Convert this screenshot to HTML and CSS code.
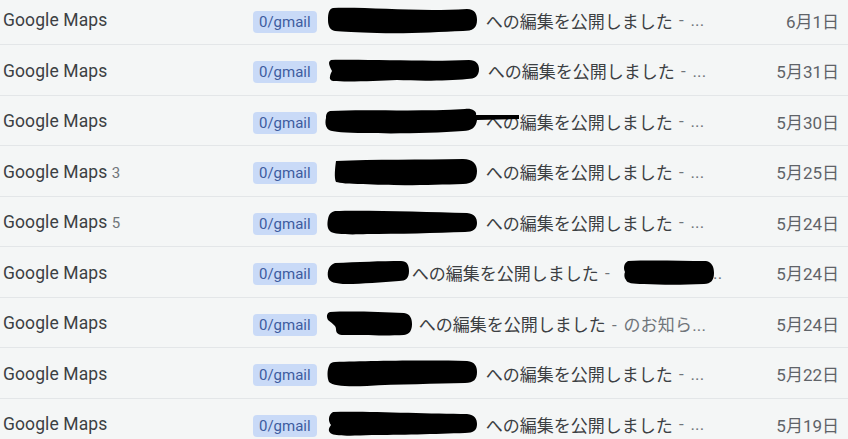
FILE: index.html
```html
<!DOCTYPE html>
<html lang="ja">
<head>
<meta charset="utf-8">
<title>Gmail list</title>
<link rel="stylesheet" href="styles.css">
</head>
<body>
<div class="list">
  <div class="row">
    <div class="sender">Google Maps</div>
    <span class="chip">0/gmail</span>
    <div class="subject">
      <svg class="blob" width="150" height="27" viewBox="0 0 150 27"><path d="M6 1 C45 0 90 5 140 2 C148 2 150 7 150 13 C150 21 146 24 136 24 C110 25 80 27 50 26 C30 25 15 25 8 24 C3 23 1 19 1 13 C1 6 2 2 6 1Z"/></svg>
      <span class="subj">への編集を公開しました</span><span class="snip"> - ...</span>
    </div>
    <div class="date">6月1日</div>
  </div>
  <div class="row">
    <div class="sender">Google Maps</div>
    <span class="chip">0/gmail</span>
    <div class="subject">
      <svg class="blob" width="152" height="23" viewBox="0 0 152 23"><path d="M4 1 C40 0 100 3 142 1 C149 1 152 5 152 10 C152 17 148 20 140 20 C120 22 90 22 70 21 C50 22 20 23 6 22 C1 21 3 16 5 12 C3 8 0 3 4 1Z"/></svg>
      <span class="subj">への編集を公開しました</span><span class="snip"> - ...</span>
    </div>
    <div class="date">5月31日</div>
  </div>
  <div class="row">
    <div class="sender">Google Maps</div>
    <span class="chip">0/gmail</span>
    <div class="subject">
      <svg class="blob over tail" width="194" height="26" viewBox="0 0 194 26"><path d="M5 3 C40 1 90 4 140 1 C148 0 152 4 151 7 L194 7 L194 11 L152 12 C151 19 147 23 138 23 C110 25 70 26 40 25 C20 25 8 24 4 22 C0 19 0 14 1 10 C1 6 2 4 5 3Z"/></svg>
      <span class="subj">への編集を公開しました</span><span class="snip"> - ...</span>
    </div>
    <div class="date">5月30日</div>
  </div>
  <div class="row">
    <div class="sender">Google Maps <span class="count">3</span></div>
    <span class="chip">0/gmail</span>
    <div class="subject">
      <svg class="blob b4" width="144" height="28" viewBox="0 0 144 28"><path d="M3 3 C40 1 90 2 130 1 C140 1 144 6 144 13 C144 21 140 26 130 26 C100 27 60 28 30 26 C15 26 7 25 3 24 C1 20 2 10 3 3Z"/></svg>
      <span class="subj">への編集を公開しました</span><span class="snip"> - ...</span>
    </div>
    <div class="date">5月25日</div>
  </div>
  <div class="row">
    <div class="sender">Google Maps <span class="count">5</span></div>
    <span class="chip">0/gmail</span>
    <div class="subject">
      <svg class="blob" width="150" height="25" viewBox="0 0 150 25"><path d="M8 1 C40 0 100 2 140 3 C148 4 150 8 150 13 C150 19 146 22 138 22 C110 23 70 24 40 24 C20 25 8 24 4 22 C0 19 0 14 1 9 C2 4 4 2 8 1Z"/></svg>
      <span class="subj">への編集を公開しました</span><span class="snip"> - ...</span>
    </div>
    <div class="date">5月24日</div>
  </div>
  <div class="row">
    <div class="sender">Google Maps</div>
    <span class="chip">0/gmail</span>
    <div class="subject">
      <svg class="blob short" width="82" height="25" viewBox="0 0 82 25"><path d="M8 3 C30 2 55 1 74 1 C80 1 82 5 82 11 C82 18 79 21 72 21 C55 22 35 24 20 24 C8 24 2 22 1 17 C0 11 2 5 8 3Z"/></svg>
      <span class="subj">への編集を公開しました</span><span class="snip"> - </span>
      <svg class="blob mid over" width="92" height="26" viewBox="0 0 92 26"><path d="M6 1 C30 0 60 1 84 1 C90 2 92 7 92 13 C92 20 89 24 82 24 C60 25 40 25 22 24 C10 24 5 23 4 20 C2 18 2 14 3 12 C1 8 2 3 6 1Z"/></svg><span class="snip dots">...</span>
    </div>
    <div class="date">5月24日</div>
  </div>
  <div class="row">
    <div class="sender">Google Maps</div>
    <span class="chip">0/gmail</span>
    <div class="subject">
      <svg class="blob short7" width="86" height="25" viewBox="0 0 86 25"><path d="M4 1 C25 0 55 1 78 2 C84 3 86 7 86 13 C86 19 84 23 78 24 C60 25 35 24 18 24 C12 24 10 22 10 18 C10 14 5 12 2 9 C0 5 1 2 4 1Z"/></svg>
      <span class="subj">への編集を公開しました</span><span class="snip"> - のお知ら...</span>
    </div>
    <div class="date">5月24日</div>
  </div>
  <div class="row">
    <div class="sender">Google Maps</div>
    <span class="chip">0/gmail</span>
    <div class="subject">
      <svg class="blob" width="150" height="27" viewBox="0 0 150 27"><path d="M8 2 C40 1 100 0 140 1 C148 2 150 6 150 12 C150 19 147 23 138 23 C110 24 70 24 40 26 C20 27 6 26 2 22 C0 18 0 10 2 6 C3 3 5 2 8 2Z"/></svg>
      <span class="subj">への編集を公開しました</span><span class="snip"> - ...</span>
    </div>
    <div class="date">5月22日</div>
  </div>
  <div class="row">
    <div class="sender">Google Maps</div>
    <span class="chip">0/gmail</span>
    <div class="subject">
      <svg class="blob" width="150" height="26" viewBox="0 0 150 26"><path d="M6 1 C40 0 100 3 140 3 C148 4 150 8 150 13 C150 19 147 22 138 22 C110 23 70 24 45 24 C25 25 10 25 5 23 C1 21 1 18 4 14 C1 10 1 4 6 1Z"/></svg>
      <span class="subj">への編集を公開しました</span><span class="snip"> - ...</span>
    </div>
    <div class="date">5月19日</div>
  </div>
</div>
</body>
</html>
```

FILE: styles.css
```css
html, body {
  margin: 0;
  padding: 0;
  background: #f4f6f6;
}
body {
  font-family: Roboto, "Noto Sans CJK JP", sans-serif;
  color: #3c4043;
  overflow: hidden;
}
.list {
  margin-top: -5.5px;
}
.row {
  display: flex;
  align-items: center;
  height: 50.5px;
  box-sizing: border-box;
  padding-top: 2px;
  border-bottom: 1px solid #e3e6e8;
  white-space: nowrap;
}
.sender {
  width: 250px;
  padding-left: 3px;
  font-size: 17.5px;
  letter-spacing: 0.1px;
  color: #3c4043;
}
.count {
  font-size: 15px;
  color: #70757a;
}
.chip {
  display: inline-block;
  height: 22px;
  line-height: 22px;
  margin-top: 3px;
  padding: 0 6px;
  border-radius: 4px;
  background: #c9daf7;
  color: #3d5c9f;
  font-size: 15px;
}
.subject {
  display: flex;
  align-items: center;
  margin-left: 10px;
  font-size: 17px;
}
.blob {
  display: block;
  flex: none;
  margin-right: 9px;
}
.blob path {
  fill: #000;
}
.over {
  position: relative;
  z-index: 1;
}
.tail {
  margin-left: -2px;
  margin-right: -33px;
}
.b4 {
  margin-left: 6px;
}
.short {
  margin-right: 3px;
}
.short7 {
  margin-left: -1px;
  margin-right: 7px;
}
.mid {
  margin-left: 6px;
  margin-right: -6px;
}
.subj {
  color: #3c4043;
}
.snip {
  color: #70757a;
  white-space: pre;
  word-spacing: 2px;
  letter-spacing: 0.2px;
}
.dots {
  position: relative;
  z-index: 0;
}
.date {
  margin-left: auto;
  padding-right: 9px;
  font-size: 17px;
  color: #5f6368;
}
```
